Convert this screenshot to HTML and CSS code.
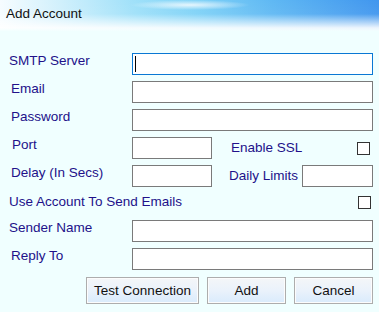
FILE: index.html
```html
<!DOCTYPE html>
<html>
<head>
<meta charset="utf-8">
<link rel="stylesheet" href="styles.css">
</head>
<body>
<div class="titlebar"><span class="title">Add Account</span></div>
<div class="form">
  <div class="row">
    <span class="label">SMTP Server</span>
    <div class="box focus"><span class="caret"></span></div>
  </div>
  <div class="row">
    <span class="label l2">Email</span>
    <div class="box"></div>
  </div>
  <div class="row">
    <span class="label l2">Password</span>
    <div class="box"></div>
  </div>
  <div class="row">
    <span class="label l3">Port</span>
    <div class="box short"></div>
    <span class="sublabel ssl">Enable SSL</span>
    <span class="check c1"></span>
  </div>
  <div class="row">
    <span class="label l2">Delay (In Secs)</span>
    <div class="box short"></div>
    <span class="sublabel daily">Daily Limits</span>
    <div class="box limit"></div>
  </div>
  <div class="row">
    <span class="label use">Use Account To Send Emails</span>
    <span class="check c2"></span>
  </div>
  <div class="row tight">
    <span class="label">Sender Name</span>
    <div class="box"></div>
  </div>
  <div class="row">
    <span class="label l2">Reply To</span>
    <div class="box"></div>
  </div>
  <div class="buttons">
    <button class="btn wide">Test Connection</button>
    <button class="btn">Add</button>
    <button class="btn">Cancel</button>
  </div>
</div>
</body>
</html>
```

FILE: styles.css
```css
html, body {
  margin: 0;
  padding: 0;
}
body {
  width: 379px;
  height: 312px;
  background: #f0ffff;
  font-family: "Liberation Sans", Arial, sans-serif;
  font-size: 13.5px;
  overflow: hidden;
}
.titlebar {
  height: 31px;
  box-sizing: border-box;
  padding: 6px 0 0 6px;
  background:
    linear-gradient(to bottom, rgba(255,255,255,0) 0%, rgba(255,255,255,0.05) 45%, rgba(255,255,255,0.9) 90%, #f2ffff 100%),
    radial-gradient(ellipse 60px 5px at 190px 5px, rgba(255,255,255,0.8), rgba(255,255,255,0)),
    linear-gradient(to right, #f6fcff 0%, #d0f0fc 16%, #9ee0f9 36%, #7fd2f7 52%, #5fb8f3 72%, #4196ee 100%);
}
.title {
  display: block;
  line-height: 16px;
  color: #111;
}
.form {
  padding: 22px 6px 0 9px;
  display: flex;
  flex-direction: column;
  gap: 6px;
}
.row {
  display: flex;
  align-items: flex-start;
  height: 22px;
}
.row.tight {
  margin-top: -1px;
}
.label {
  width: 123px;
  flex: none;
  line-height: 16px;
  color: #22118a;
  white-space: nowrap;
}
.label.l2 { padding-left: 2px; width: 121px; }
.label.l3 { padding-left: 3px; width: 120px; }
.label.use { width: auto; flex: 1; padding-top: 1px; }
.box {
  flex: 1;
  height: 22px;
  box-sizing: border-box;
  border: 1px solid #7a7a7a;
  background: #fff;
  display: flex;
  align-items: center;
}
.box.focus {
  border-color: #0a78d4;
}
.caret {
  width: 1px;
  height: 16px;
  margin-left: 2px;
  background: #000;
}
.box.short {
  flex: none;
  width: 80px;
}
.sublabel {
  line-height: 22px;
  color: #22118a;
  white-space: nowrap;
}
.ssl { margin-left: 19px; flex: 1; }
.daily { margin-left: 17px; width: 73px; }
.box.limit {
  flex: none;
  width: 71px;
}
.check {
  width: 13px;
  height: 13px;
  box-sizing: border-box;
  border: 1px solid #333;
  background: #fff;
  flex: none;
}
.c1 { margin-top: 5px; margin-right: 3px; }
.c2 { margin-top: 3px; margin-right: 2px; }
.buttons {
  display: flex;
  justify-content: flex-end;
  gap: 8px;
  margin-top: 1px;
}
.btn {
  width: 79px;
  height: 27px;
  box-sizing: border-box;
  border: 1px solid #adadad;
  border-radius: 0;
  padding: 0;
  background: linear-gradient(to bottom, #f4f6f8 0%, #eaf2fb 50%, #d9ebfc 100%);
  box-shadow: inset 0 0 0 1px #fcfcfc;
  font-family: "Liberation Sans", Arial, sans-serif;
  font-size: 13.5px;
  line-height: 16px;
  color: #111;
}
.btn.wide {
  width: 113px;
}
```
